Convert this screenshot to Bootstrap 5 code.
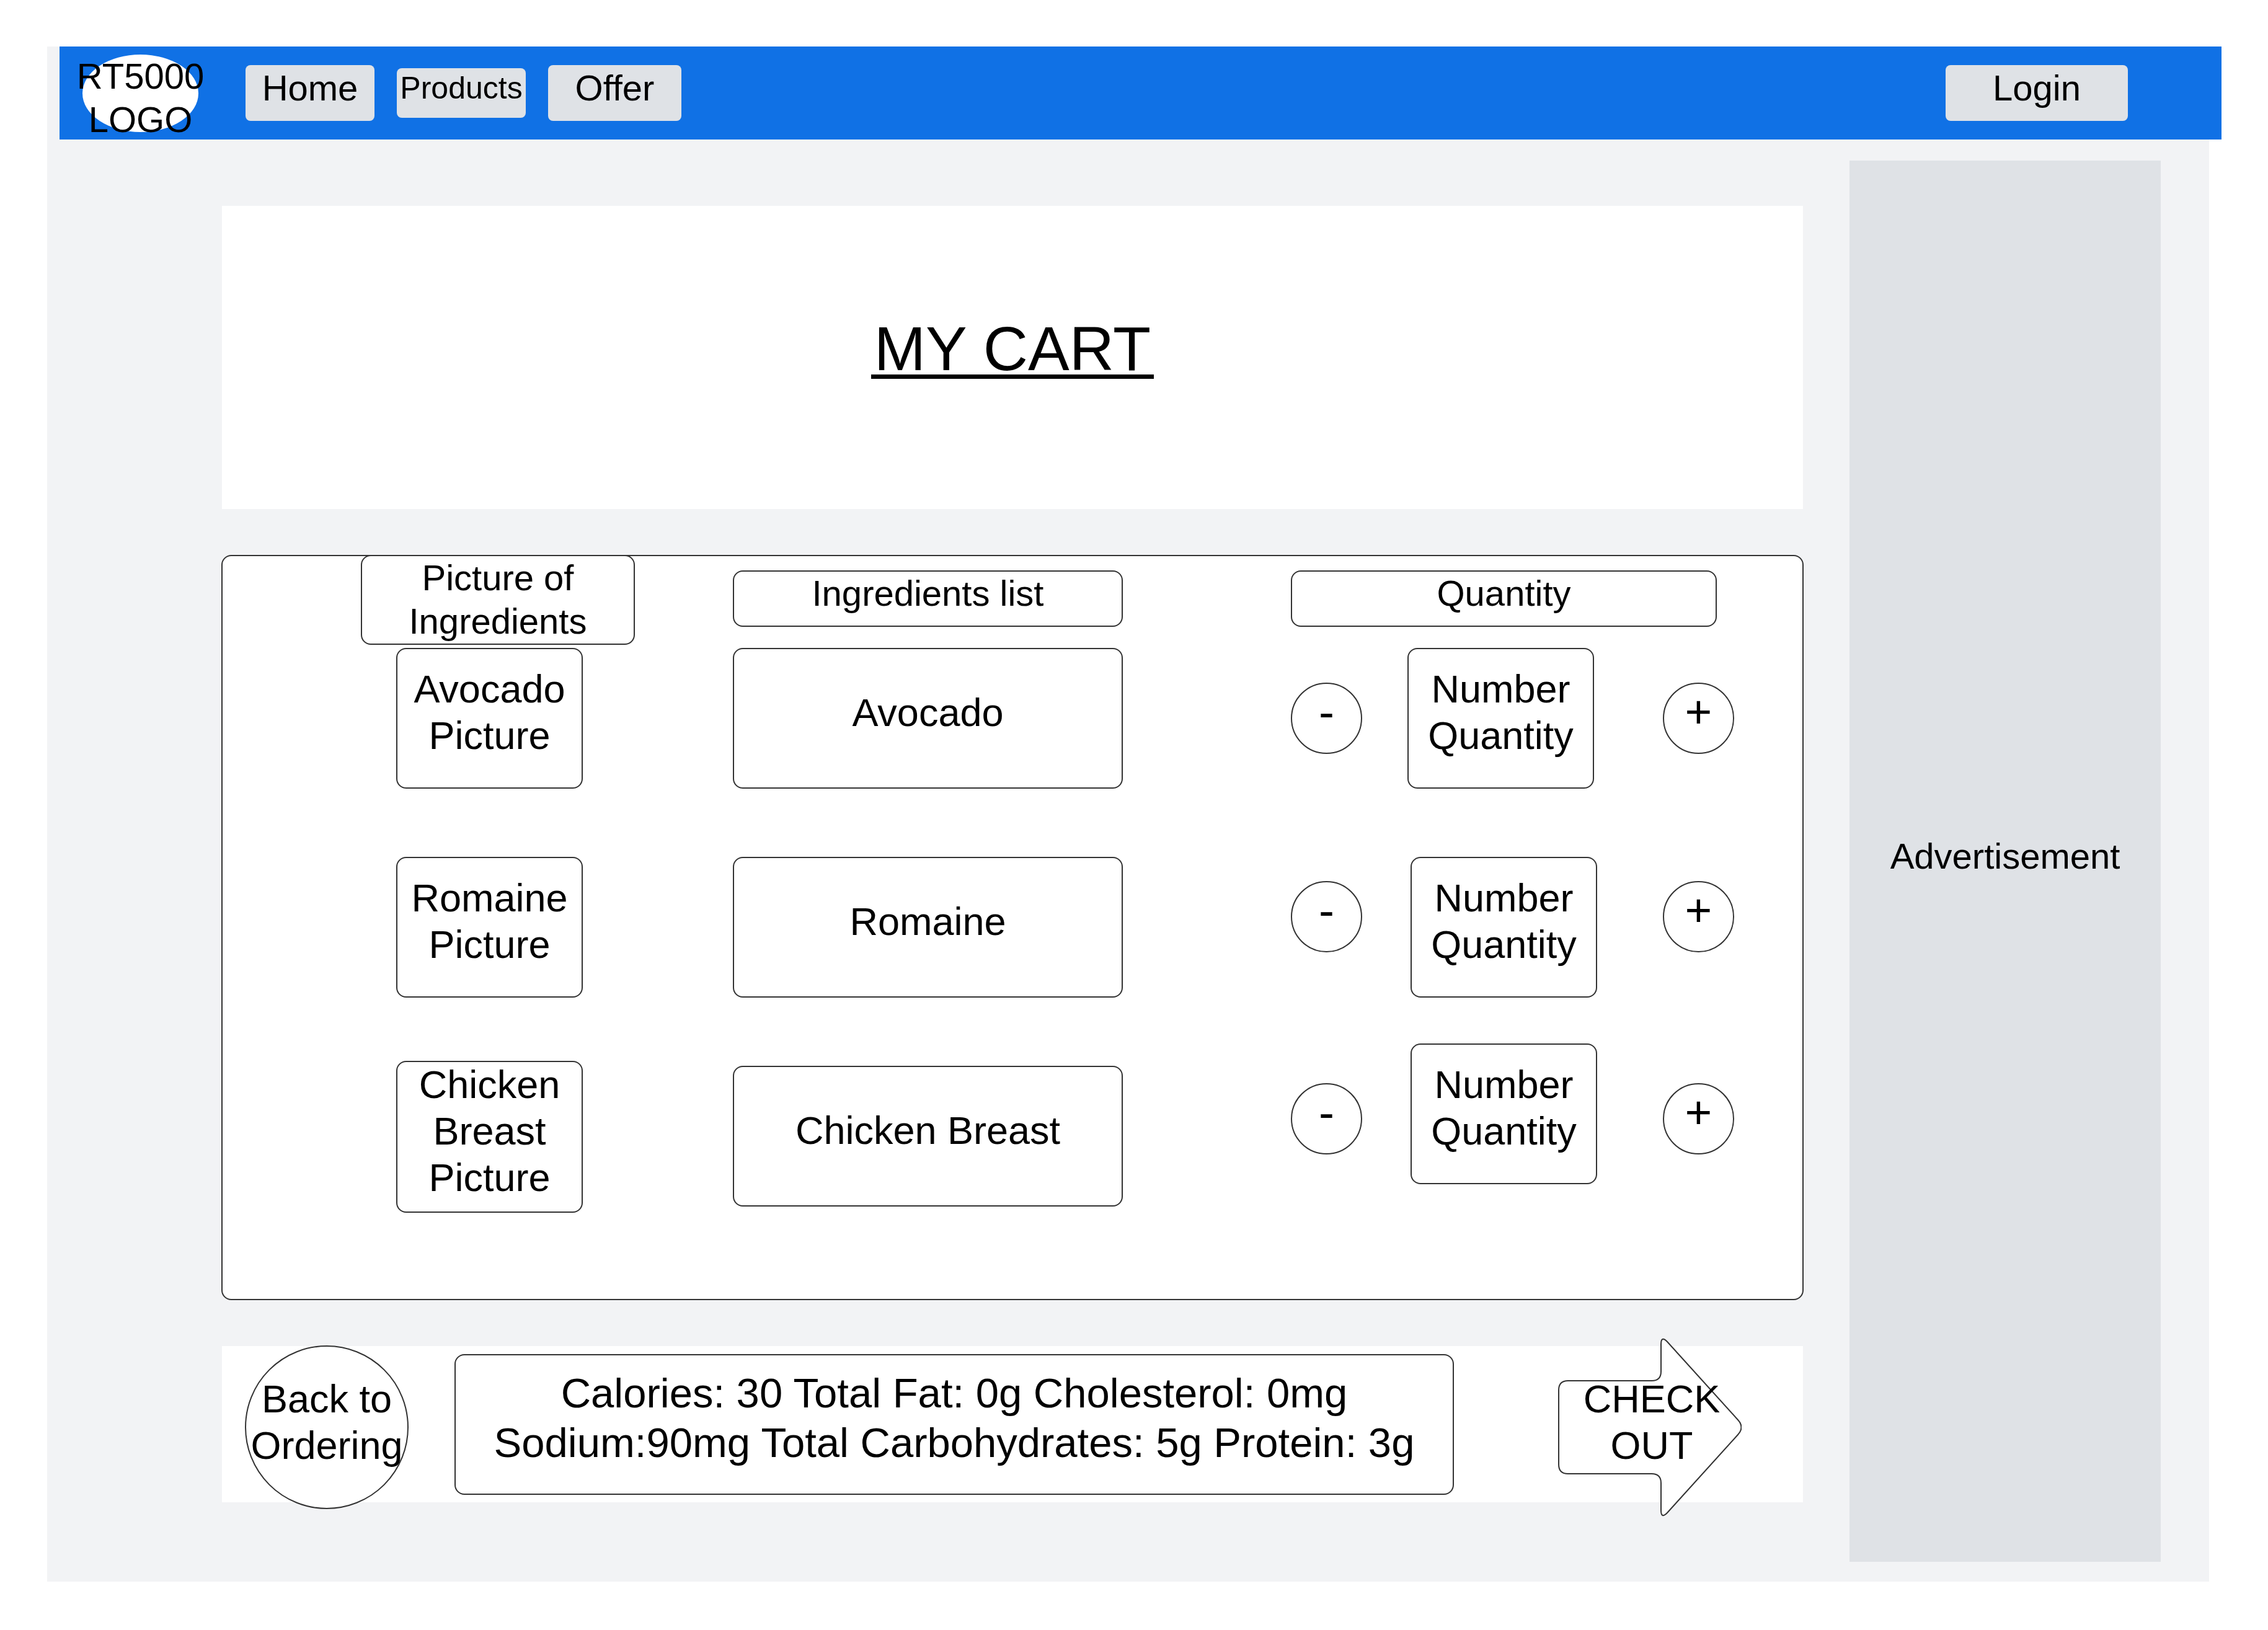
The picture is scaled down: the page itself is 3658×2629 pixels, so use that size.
<!DOCTYPE html>
<html lang="en">
<head>
<meta charset="utf-8">
<meta name="viewport" content="width=device-width, initial-scale=1">
<title>My Cart</title>
<link href="https://cdn.jsdelivr.net/npm/bootstrap@5.3.0/dist/css/bootstrap.min.css" rel="stylesheet">
<style>
  :root { --ink: #333; --sheet: #f2f3f5; --panel: #dfe2e6; --brand: #1071e5; }
  body { font-family: "Liberation Sans", Arial, sans-serif; font-size: 58px; line-height: 70px; color: #000; background: #fff; padding: 75px 95px 78px 76px; }
  .sheet { background: var(--sheet); }

  /* top bar, shifted to the right of the sheet */
  .topbar { height: 150px; margin: 0 -20px 0 20px; padding: 0 151px 0 37px; background: var(--brand); }
  .logo { width: 187px; height: 125px; margin-right: 76px; border-radius: 50%; background: #fff; color: #000; white-space: nowrap; text-decoration: none; }
  .btn-nav { --bs-btn-bg: var(--panel); --bs-btn-color: #000; --bs-btn-hover-bg: #cfd4da; --bs-btn-border-width: 0; --bs-btn-border-radius: 8px; --bs-btn-font-size: 58px; --bs-btn-line-height: 70px; padding: 2px 0 18px; width: 208px; }
  .btn-nav-sm { --bs-btn-font-size: 50px; --bs-btn-line-height: 60px; }
  .btn-nav-md { width: 215px; }
  .btn-nav-lg { width: 294px; }
  .nav-gap { gap: 36px; }

  .content { padding: 34px 78px 32px 282px; gap: 75px; }
  .main-col { padding: 73px 0 96px; gap: 74px; min-width: 0; }
  .hero { height: 489px; padding-bottom: 22px; }
  .hero h1 { font-size: 100px; line-height: 84px; font-weight: 400; padding: 0 5px; border-bottom: 7px solid #000; }
  .ad { width: 502px; background: var(--panel); padding-bottom: 16px; }

  /* outlined shapes */
  .shape { display: flex; align-items: center; justify-content: center; text-align: center; background: #fff; border: 2px solid var(--ink); border-radius: 16px; padding: 0 0 17px; color: #000; }
  .shape-head { height: 91px; }
  .shape-item { height: 227px; font-size: 63px; line-height: 75px; padding-bottom: 19px; }
  .shape-tall { height: 245px; }
  .shape-round { border-radius: 50%; }

  .cart { display: grid; grid-template-columns: 223fr 442fr 158fr 629fr 271fr 715fr 110fr; min-height: 1202px; margin: 0 -1px; border: 2px solid var(--ink); border-radius: 16px; background: #fff; }
  .cart-pictures { grid-column: 2; margin-top: -2px; }
  .cart-pictures .shape-head { height: 145px; padding-bottom: 1px; margin-bottom: 5px; }
  .cart-pictures .shape-item { width: 301px; margin-left: 57px; }
  .cart-pictures .shape-item + .shape-item { margin-top: 110px; }
  .cart-pictures .shape-item + .shape-tall { height: 245px; margin-top: 102px; }
  .cart-names { grid-column: 4; padding-top: 23px; }
  .cart-amounts { grid-column: 6; padding-top: 23px; }
  .cart-names .shape-head, .cart-amounts .shape-head { margin-bottom: 34px; }
  .cart-amounts .shape-head { margin-right: 28px; }
  .cart-names .shape-item + .shape-item { margin-top: 110px; }
  .stepper { display: grid; grid-template-columns: 188px 301px 1fr; }
  .stepper .btn-step { width: 115px; height: 115px; font-size: 75px; line-height: 90px; padding-bottom: 22px; margin-top: 56px; }
  .stepper .btn-step:last-child { justify-self: end; }
  .stepper-mid, .stepper-last { grid-template-columns: 193px 301px 1fr; }
  .stepper-mid { margin-top: 110px; }
  .stepper-mid .btn-step { margin-top: 39px; }
  .stepper-last { margin-top: 74px; }
  .stepper-last .btn-step { margin-top: 64px; }

  .summary { height: 252px; padding: 0 99px 0 37px; background: #fff; }
  .back { width: 264px; height: 264px; margin: 10px 74px 0 0; font-size: 63px; line-height: 75px; white-space: nowrap; text-decoration: none; }
  .facts { height: 227px; font-size: 67px; line-height: 80px; margin-right: 168px; padding-bottom: 20px; }
  .checkout { width: 296px; height: 288px; margin-top: 10px; padding: 0 0 17px 6px; border: 0; background: none; color: #000; font-size: 63px; line-height: 75px; }
  .checkout svg { position: absolute; inset: 0; }
  .checkout span { position: relative; }
</style>
</head>
<body>
<div class="sheet">
  <nav class="topbar d-flex align-items-center" aria-label="Main">
    <a href="#" class="logo d-flex justify-content-center text-center flex-shrink-0">RT5000<br>LOGO</a>
    <div class="d-flex align-items-center nav-gap">
      <button type="button" class="btn btn-nav">Home</button>
      <button type="button" class="btn btn-nav btn-nav-sm">Products</button>
      <button type="button" class="btn btn-nav btn-nav-md">Offer</button>
    </div>
    <button type="button" class="btn btn-nav btn-nav-lg ms-auto">Login</button>
  </nav>

  <div class="content d-flex">
    <main class="main-col d-flex flex-column flex-grow-1">
      <header class="hero bg-white d-flex align-items-center justify-content-center">
        <h1 class="m-0">MY CART</h1>
      </header>

      <section class="cart" aria-label="Cart items">
        <div class="cart-pictures">
          <div class="shape shape-head">Picture of<br>Ingredients</div>
          <div class="shape shape-item">Avocado<br>Picture</div>
          <div class="shape shape-item">Romaine<br>Picture</div>
          <div class="shape shape-item shape-tall">Chicken<br>Breast<br>Picture</div>
        </div>
        <div class="cart-names">
          <div class="shape shape-head">Ingredients list</div>
          <div class="shape shape-item">Avocado</div>
          <div class="shape shape-item">Romaine</div>
          <div class="shape shape-item">Chicken Breast</div>
        </div>
        <div class="cart-amounts">
          <div class="shape shape-head">Quantity</div>
          <div class="stepper">
            <button type="button" class="shape shape-round btn-step">-</button>
            <output class="shape shape-item">Number<br>Quantity</output>
            <button type="button" class="shape shape-round btn-step">+</button>
          </div>
          <div class="stepper stepper-mid">
            <button type="button" class="shape shape-round btn-step">-</button>
            <output class="shape shape-item">Number<br>Quantity</output>
            <button type="button" class="shape shape-round btn-step">+</button>
          </div>
          <div class="stepper stepper-last">
            <button type="button" class="shape shape-round btn-step">-</button>
            <output class="shape shape-item">Number<br>Quantity</output>
            <button type="button" class="shape shape-round btn-step">+</button>
          </div>
        </div>
      </section>

      <footer class="summary d-flex align-items-center">
        <a href="#" class="back shape shape-round flex-shrink-0">Back to<br>Ordering</a>
        <div class="facts shape flex-grow-1">Calories: 30 Total Fat: 0g Cholesterol: 0mg<br>Sodium:90mg Total Carbohydrates: 5g Protein: 3g</div>
        <button type="button" class="checkout position-relative flex-shrink-0">
          <svg viewBox="0 0 296 288" width="296" height="288" fill="#fff" stroke="#333" stroke-width="2" aria-hidden="true">
            <path d="M1 84 Q1 69 16 69 H151 Q166 69 166 54 V10 Q166 -4 176 6 L290 132 Q301 144 290 156 L176 282 Q166 292 166 278 V234 Q166 219 151 219 H16 Q1 219 1 204 Z"/>
          </svg>
          <span>CHECK<br>OUT</span>
        </button>
      </footer>
    </main>

    <aside class="ad d-flex align-items-center justify-content-center flex-shrink-0">Advertisement</aside>
  </div>
</div>
<script src="https://cdn.jsdelivr.net/npm/bootstrap@5.3.0/dist/js/bootstrap.bundle.min.js"></script>
</body>
</html>
